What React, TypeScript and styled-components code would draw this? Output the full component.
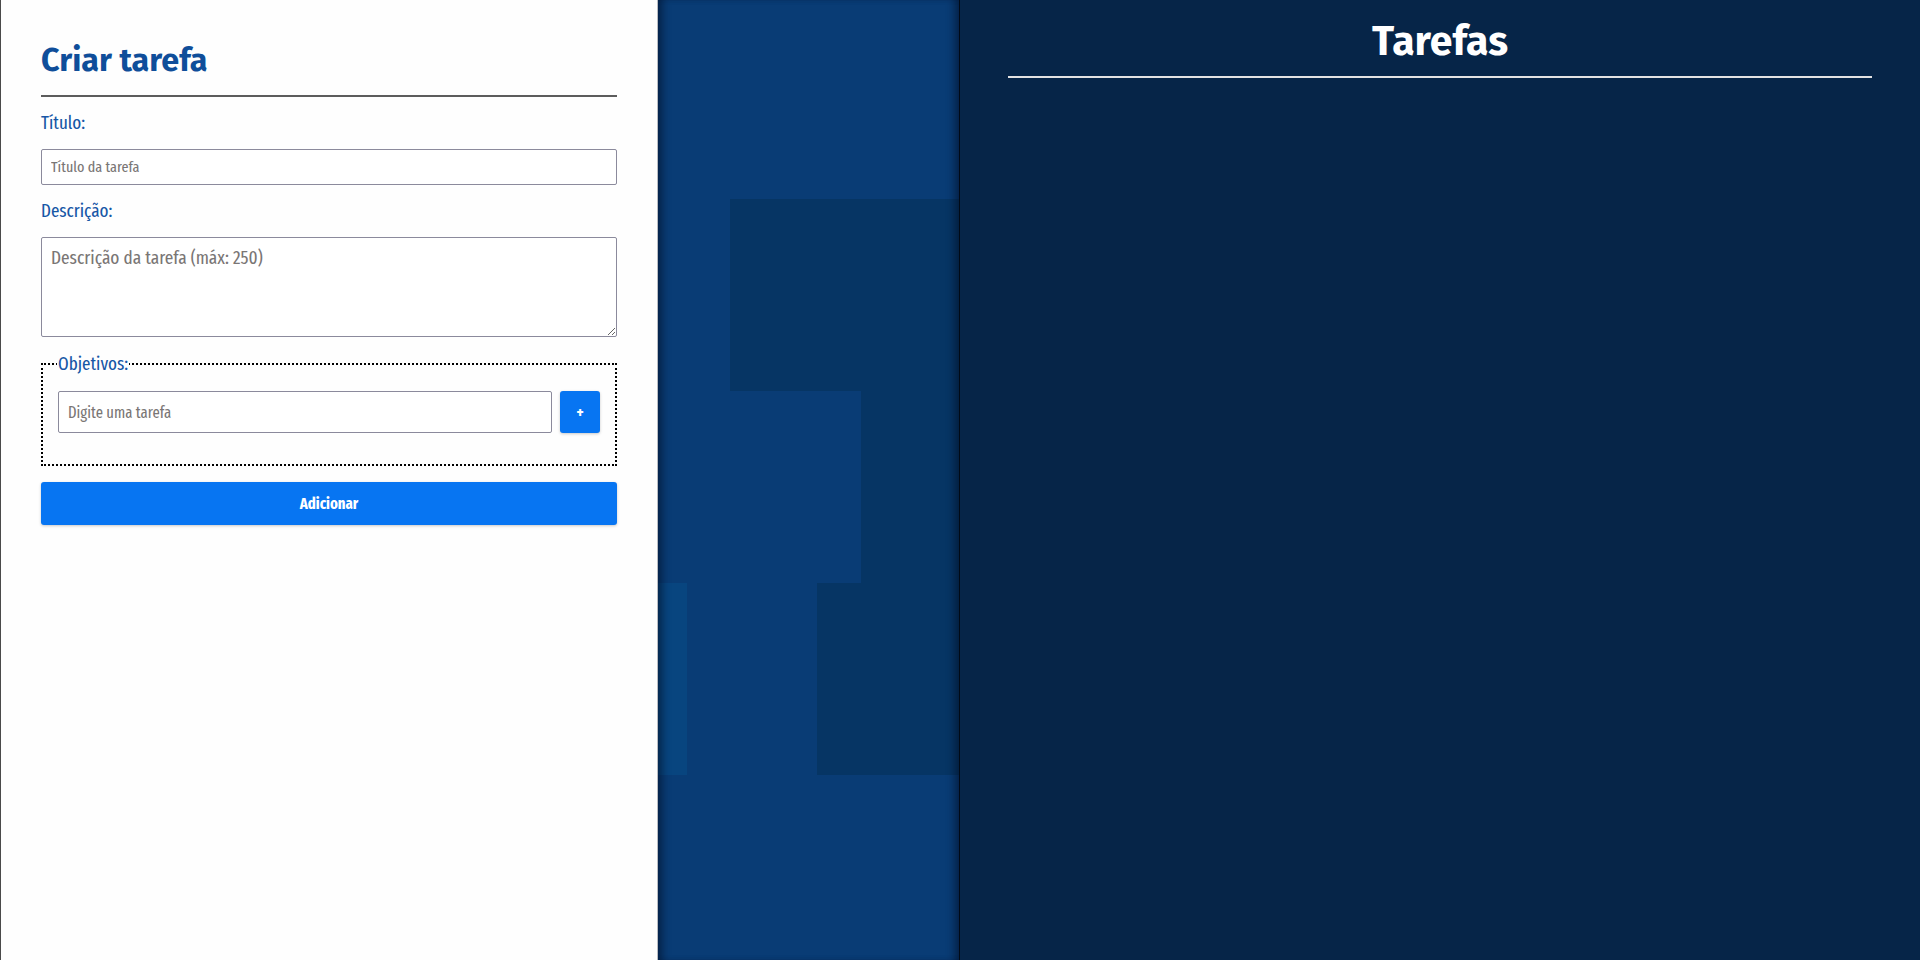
import React from "react";
import styled, { createGlobalStyle } from "styled-components";

const BODY_FONT = `"Fira Sans Extra Condensed", "Fira Sans Condensed", "Fira Sans", sans-serif`;
const HEAD_FONT = `"Fira Sans", "Open Sans", sans-serif`;

const GlobalStyle = createGlobalStyle`
  * { box-sizing: border-box; }
  html, body { margin: 0; padding: 0; }
  body {
    font-family: ${BODY_FONT};
    background: #fff;
    overflow: hidden;
  }
`;

const Page = styled.div`
  display: flex;
  width: 1920px;
  height: 960px;
`;

const FormPanel = styled.section`
  width: 658px;
  flex: none;
  background: #fefefe;
  border-left: 1px solid #4a4a4a;
  border-right: 1px solid #b9bcc2;
  padding: 42px 40px 0;
  display: flex;
  flex-direction: column;
`;

const Heading = styled.h1`
  margin: 0;
  font-family: ${HEAD_FONT};
  font-size: 32.3px;
  line-height: 38.4px;
  font-weight: 700;
  color: #0f4e9a;
`;

const Divider = styled.div<{ $color: string }>`
  height: 2px;
  background: ${(p) => p.$color};
`;

const HeadDivider = styled(Divider)`
  margin-top: 15px;
`;

const Form = styled.form`
  display: flex;
  flex-direction: column;
  gap: 16px;
  margin-top: 16px;
`;

const Label = styled.label`
  font-size: 18.5px;
  line-height: 20px;
  color: #1757a6;
`;

const TextInput = styled.input<{ $h: number; $fs: number }>`
  display: block;
  width: 100%;
  height: ${(p) => p.$h}px;
  margin: 0;
  padding: 0 9px;
  border: 1px solid #8b8a9c;
  border-radius: 2px;
  background: #fff;
  font-family: ${BODY_FONT};
  font-size: ${(p) => p.$fs}px;
  color: #222;
  outline: none;
  &::placeholder { color: #7a7675; }
`;

const TextArea = styled.textarea`
  display: block;
  width: 100%;
  height: 100px;
  margin: 0;
  padding: 9px 9px;
  border: 1px solid #8b8a9c;
  border-radius: 2px;
  background: #fff;
  font-family: ${BODY_FONT};
  font-size: 18.8px;
  line-height: 22.4px;
  outline: none;
  &::placeholder { color: #7a7675; }
`;

const GoalsBox = styled.fieldset`
  margin: 0;
  min-width: 0;
  padding: 16px 15px 31px;
  border: 2px dotted #000;
`;

const GoalsLegend = styled.legend`
  margin-left: -1px;
  padding: 0 1px;
  font-size: 18.5px;
  line-height: 22px;
  color: #1757a6;
`;

const GoalRow = styled.div`
  display: flex;
  align-items: stretch;
  gap: 8px;
`;

const PrimaryButton = styled.button<{ $w?: number; $h: number }>`
  flex: none;
  width: ${(p) => (p.$w ? `${p.$w}px` : "100%")};
  height: ${(p) => p.$h}px;
  margin: 0;
  padding: 0;
  border: none;
  border-radius: 3px;
  background: #0775f2;
  color: #fff;
  font-family: ${BODY_FONT};
  font-weight: 700;
  font-size: 16px;
  box-shadow: 0 1px 3px rgba(0, 0, 0, 0.22);
  cursor: pointer;
`;

const Backdrop = styled.div`
  position: relative;
  width: 301px;
  flex: none;
  background: #093c75;
  overflow: hidden;
  &::after {
    content: "";
    position: absolute;
    inset: 0;
    box-shadow: inset 9px 0 9px -5px rgba(0, 10, 30, 0.55),
      inset -9px 0 9px -5px rgba(0, 10, 30, 0.55);
    pointer-events: none;
  }
`;

const Pattern = styled.svg`
  position: absolute;
  inset: 0;
  display: block;
`;

const ListPanel = styled.section`
  flex: 1;
  background: #062548;
  border-left: 1px solid #010a16;
  display: flex;
  flex-direction: column;
  align-items: center;
  padding-top: 17px;
`;

const ListTitle = styled.h2`
  margin: 0;
  font-family: ${HEAD_FONT};
  font-size: 41px;
  line-height: 49px;
  font-weight: 700;
  color: #fff;
`;

const ListDivider = styled(Divider)`
  width: 90%;
  margin-top: 10px;
`;

export default function App() {
  return (
    <>
      <GlobalStyle />
      <Page>
        <FormPanel>
          <Heading>Criar tarefa</Heading>
          <HeadDivider $color="#5c5c5c" />
          <Form onSubmit={(e) => e.preventDefault()}>
            <Label htmlFor="titulo">Título:</Label>
            <TextInput id="titulo" $h={36} $fs={15.4} placeholder="Título da tarefa" />
            <Label htmlFor="descricao">Descrição:</Label>
            <TextArea id="descricao" placeholder="Descrição da tarefa (máx: 250)" />
            <GoalsBox>
              <GoalsLegend>Objetivos:</GoalsLegend>
              <GoalRow>
                <TextInput $h={42} $fs={16} placeholder="Digite uma tarefa" />
                <PrimaryButton type="button" $w={40} $h={42}>+</PrimaryButton>
              </GoalRow>
            </GoalsBox>
            <PrimaryButton type="submit" $h={43}>Adicionar</PrimaryButton>
          </Form>
        </FormPanel>
        <Backdrop>
          <Pattern width="301" height="960" viewBox="0 0 301 960">
            <rect x="72" y="199" width="229" height="192" fill="#063564" />
            <rect x="203" y="391" width="98" height="192" fill="#063564" />
            <rect x="159" y="583" width="142" height="192" fill="#063564" />
            <rect x="0" y="583" width="29" height="192" fill="#08457f" />
          </Pattern>
        </Backdrop>
        <ListPanel>
          <ListTitle>Tarefas</ListTitle>
          <ListDivider $color="#e2e2e2" />
        </ListPanel>
      </Page>
    </>
  );
}
